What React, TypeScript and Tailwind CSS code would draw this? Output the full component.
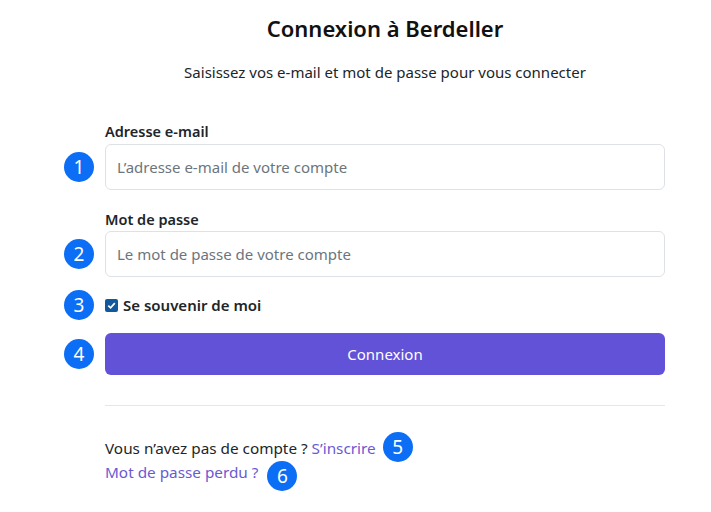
export default function App() {
  const badge =
    "flex h-[30px] w-[30px] shrink-0 items-center justify-center rounded-full bg-[#0b6ef5] text-[19px] leading-none text-white";

  return (
    <div className="h-[512px] w-[711px] bg-white font-['Noto_Sans',sans-serif] text-[#212529]">
      <div className="ml-[105px] w-[560px] pt-[13px]">
        <h1 className="text-center text-[22px] font-semibold leading-[30px] text-[#111]">
          Connexion à Berdeller
        </h1>
        <p className="mt-[18px] text-center text-[15px] leading-[22px]">
          Saisissez vos e-mail et mot de passe pour vous connecter
        </p>
      </div>

      <div className="mt-[37px] flex flex-col">
        {/* email */}
        <div className="ml-[105px] text-[14.5px] font-semibold leading-[22px]">Adresse e-mail</div>
        <div className="mt-[2px] flex items-center">
          <div className="flex w-[105px] pl-[64px]">
            <span className={badge}>1</span>
          </div>
          <input
            type="text"
            placeholder="L’adresse e-mail de votre compte"
            className="h-[46px] w-[560px] rounded-[6px] border border-[#dee2e6] px-[11px] text-[15px] outline-none placeholder:text-[#6c757d]"
          />
        </div>

        {/* password */}
        <div className="ml-[105px] mt-[18px] text-[14.5px] font-semibold leading-[22px]">Mot de passe</div>
        <div className="mt-[1px] flex items-center">
          <div className="flex w-[105px] pl-[64px]">
            <span className={badge}>2</span>
          </div>
          <input
            type="password"
            placeholder="Le mot de passe de votre compte"
            className="h-[46px] w-[560px] rounded-[6px] border border-[#dee2e6] px-[11px] text-[15px] outline-none placeholder:text-[#6c757d]"
          />
        </div>

        {/* remember */}
        <div className="mt-[17px] flex h-[22px] items-center">
          <div className="flex w-[105px] pl-[64px]">
            <span className={badge}>3</span>
          </div>
          <label className="flex items-center gap-[5px] text-[15px] font-semibold">
            <span className="flex h-[13px] w-[13px] items-center justify-center rounded-[2px] bg-[#10599c]">
              <svg viewBox="0 0 12 12" className="h-[11px] w-[11px]">
                <path d="M2.5 6.2 L5 8.6 L9.6 3.4" fill="none" stroke="#fff" strokeWidth="1.8" />
              </svg>
            </span>
            Se souvenir de moi
          </label>
        </div>

        {/* submit */}
        <div className="mt-[17px] flex items-center">
          <div className="flex w-[105px] pl-[64px]">
            <span className={badge}>4</span>
          </div>
          <button className="h-[42px] w-[560px] rounded-[6px] bg-[#6252d7] text-[15px] text-white">
            Connexion
          </button>
        </div>

        <div className="ml-[105px] mt-[30px] w-[560px] border-t border-[#e6e6e6]" />

        <div className="ml-[105px] mt-[30px] text-[15.3px] leading-[24px]">
          <div className="flex items-center">
            Vous n’avez pas de compte ?&nbsp;<span className="text-[#6a5ad2]">S’inscrire</span>
            <span className={badge + " relative -top-[1px] -my-[3px] ml-[7px]"}>5</span>
          </div>
          <div className="flex items-center">
            <span className="text-[#6a5ad2]">Mot de passe perdu ?</span>
            <span className={badge + " relative top-[4px] -my-[3px] ml-[9px]"}>6</span>
          </div>
        </div>
      </div>
    </div>
  );
}
